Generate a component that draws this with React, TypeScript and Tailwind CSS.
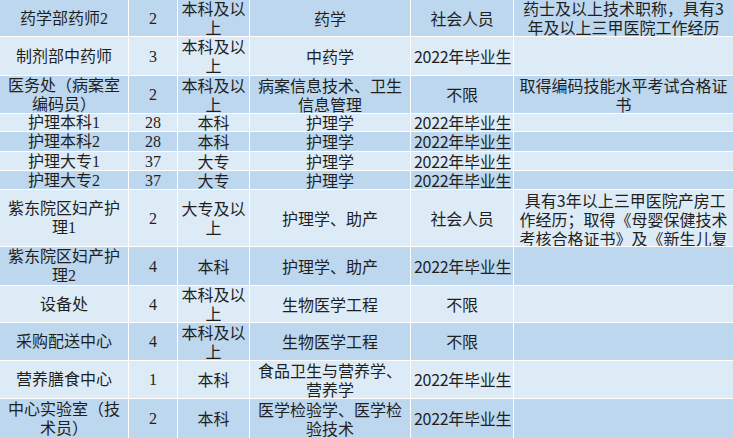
type Row = {
  h: number;
  cells: string[];
  topNote?: boolean;
};

const rows: Row[] = [
  { h: 36, cells: ["药学部药师2", "2", "本科及以上", "药学", "社会人员", "药士及以上技术职称，具有3年及以上三甲医院工作经历"] },
  { h: 38, cells: ["制剂部中药师", "3", "本科及以上", "中药学", "2022年毕业生", ""] },
  { h: 37, cells: ["医务处（病案室编码员）", "2", "本科及以上", "病案信息技术、卫生信息管理", "不限", "取得编码技能水平考试合格证书"] },
  { h: 17, cells: ["护理本科1", "28", "本科", "护理学", "2022年毕业生", ""] },
  { h: 19, cells: ["护理本科2", "28", "本科", "护理学", "2022年毕业生", ""] },
  { h: 18, cells: ["护理大专1", "37", "大专", "护理学", "2022年毕业生", ""] },
  { h: 18, cells: ["护理大专2", "37", "大专", "护理学", "2022年毕业生", ""] },
  {
    h: 56,
    topNote: true,
    cells: ["紫东院区妇产护理1", "2", "大专及以上", "护理学、助产", "社会人员", " 具有3年以上三甲医院产房工作经历；取得《母婴保健技术考核合格证书》及《新生儿复苏技术合格证书》"],
  },
  { h: 38, cells: ["紫东院区妇产护理2", "4", "本科", "护理学、助产", "2022年毕业生", ""] },
  { h: 36, cells: ["设备处", "4", "本科及以上", "生物医学工程", "不限", ""] },
  { h: 37, cells: ["采购配送中心", "4", "本科及以上", "生物医学工程", "不限", ""] },
  { h: 37, cells: ["营养膳食中心", "1", "本科", "食品卫生与营养学、营养学", "2022年毕业生", ""] },
  { h: 39, cells: ["中心实验室（技术员）", "2", "本科", "医学检验学、医学检验技术", "2022年毕业生", ""] },
];

// first two columns use serif digits like the sheet
const serif = "font-['Liberation_Serif','Noto_Sans_CJK_SC',serif]";
const sans = "font-['Noto_Sans_CJK_SC',sans-serif]";
const cellFont = [serif, serif, sans, sans, sans, sans];

export default function App() {
  return (
    <div className="w-[733px] h-[438px] overflow-hidden bg-white flex flex-col gap-px text-[16px] leading-[19px] text-[#1f1f1f]">
      {rows.map((row, i) => (
        <div
          key={i}
          className="grid grid-cols-[128px_48px_71px_160px_102px_1fr] gap-px shrink-0"
          style={{ height: row.h }}
        >
          {row.cells.map((text, j) => (
            <div
              key={j}
              className={`flex justify-center overflow-hidden px-[3px] text-center ${cellFont[j]} ${
                j === 4 ? "whitespace-nowrap tracking-[-0.3px]" : "whitespace-pre-wrap"
              } ${row.topNote && j === 5 ? "items-start pt-[1px]" : "items-center"} ${
                i % 2 === 0 ? "bg-[#bdd7ee]" : "bg-[#ddebf7]"
              }`}
            >
              <span className="block w-full">{text}</span>
            </div>
          ))}
        </div>
      ))}
    </div>
  );
}
